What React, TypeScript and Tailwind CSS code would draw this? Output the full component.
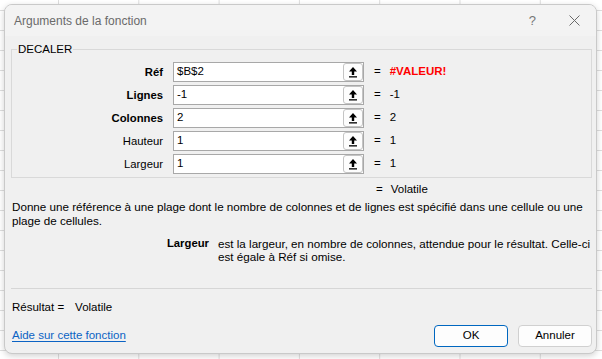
import React from "react";

const font = { fontFamily: '"Liberation Sans", Arial, sans-serif' };

type Arg = { label: string; bold: boolean; value: string; result: string; error?: boolean };

const args: Arg[] = [
  { label: "Réf", bold: true, value: "$B$2", result: "#VALEUR!", error: true },
  { label: "Lignes", bold: true, value: "-1", result: "-1" },
  { label: "Colonnes", bold: true, value: "2", result: "2" },
  { label: "Hauteur", bold: false, value: "1", result: "1" },
  { label: "Largeur", bold: false, value: "1", result: "1" },
];

function CollapseIcon() {
  return (
    <svg width="10" height="12" viewBox="0 0 10 12">
      <path d="M5 1 L9 5.5 L6.2 5.5 L6.2 9 L3.8 9 L3.8 5.5 L1 5.5 Z" fill="#000" />
      <rect x="1" y="10.2" width="8" height="1.3" fill="#000" />
    </svg>
  );
}

function ArgRow({ arg }: { arg: Arg }) {
  return (
    <div className="flex h-[20px] items-center">
      <div
        className={`w-[152px] pr-[1px] text-right text-[11.3px] text-black ${
          arg.bold ? "font-bold" : ""
        }`}
      >
        {arg.label}
      </div>
      <div className="ml-[9px] flex h-[20px] w-[191px] items-center border border-[#a8a8a8] bg-white">
        <span className="flex-1 pl-[3px] text-[11.5px] leading-none text-black">{arg.value}</span>
        <div className="flex h-[18px] w-[20px] items-center justify-center rounded-[3px] border border-[#c4c4c4] bg-[#fdfdfd]">
          <CollapseIcon />
        </div>
      </div>
      <span className="ml-[10px] text-[11.5px] text-black">=</span>
      <span
        className={`ml-[9px] text-[11.5px] ${
          arg.error ? "font-bold text-[#ff0000]" : "text-black"
        }`}
      >
        {arg.result}
      </span>
    </div>
  );
}

export default function App() {
  return (
    <div
      className="h-[359px] w-[602px] overflow-hidden bg-white bg-[linear-gradient(to_right,#dedede_1px,transparent_1px),linear-gradient(to_bottom,#dedede_1px,transparent_1px)] bg-[size:80.3px_20px] bg-[position:58px_10px] pt-[4px] pl-[4px]"
      style={font}
    >
      <div className="flex h-[350px] w-[593px] flex-col overflow-hidden rounded-[8px] border border-[#c9c9c9] bg-[#f0f0f0] shadow-[0_2px_6px_rgba(0,0,0,0.18)]">
        {/* title bar */}
        <div className="flex h-[31px] shrink-0 items-center bg-[#f3f3f3] pl-[9px]">
          <span className="text-[12px] text-[#6a6a6a]">Arguments de la fonction</span>
          <span className="ml-auto mr-[33px] text-[13px] text-[#777]">?</span>
          <svg width="11" height="11" viewBox="0 0 11 11" className="mr-[16px]">
            <path d="M0.5 0.5 L10.5 10.5 M10.5 0.5 L0.5 10.5" stroke="#6a6a6a" strokeWidth="1" />
          </svg>
        </div>

        <div className="flex flex-1 flex-col pl-[6px] pr-[4px]">
          <fieldset className="mt-[5px] border border-[#d9d9d9] pt-[5px] pb-[3px]">
            <legend className="ml-[5px] px-[1px] text-[11.5px] leading-[16px] text-black">DECALER</legend>
            <div className="flex flex-col gap-[3px]">
              {args.map((arg) => (
                <ArgRow key={arg.label} arg={arg} />
              ))}
            </div>
          </fieldset>

          <div className="mt-[5px] flex h-[14px] items-center text-[11.5px] text-black">
            <span className="ml-[365px]">=</span>
            <span className="ml-[8px]">Volatile</span>
          </div>

          <div className="mt-[3px] pl-[1px] text-[11.65px] leading-[14px] text-black">
            <div className="whitespace-nowrap">
              Donne une référence à une plage dont le nombre de colonnes et de lignes est spécifié dans une cellule ou une
            </div>
            <div>plage de cellules.</div>
          </div>

          <div className="mt-[9px] flex text-[11.65px] leading-[13px] text-black">
            <div className="w-[198px] shrink-0 text-right text-[11.3px] font-bold">Largeur</div>
            <div className="ml-[9px]">
              <div className="whitespace-nowrap">
                est la largeur, en nombre de colonnes, attendue pour le résultat. Celle-ci
              </div>
              <div>est égale à Réf si omise.</div>
            </div>
          </div>

          <div className="mt-[25px] h-px bg-[#d6d6d6]" />

          <div className="mt-[12px] flex h-[14px] items-center pl-[1px] text-[11.5px] text-black">
            <span>Résultat =</span>
            <span className="ml-[11px]">Volatile</span>
          </div>

          <div className="mt-[10px] flex items-center">
            <span className="pl-[1px] text-[11.5px] text-[#0b63c4] underline underline-offset-2">
              Aide sur cette fonction
            </span>
            <button
              type="button"
              className="ml-auto h-[22px] w-[74px] rounded-[4px] border border-[#0067c0] bg-[#fdfdfd] text-[11.5px] text-black"
            >
              OK
            </button>
            <button
              type="button"
              className="ml-[10px] h-[22px] w-[74px] rounded-[4px] border border-[#d0d0d0] bg-[#fdfdfd] text-[11.5px] text-black"
            >
              Annuler
            </button>
          </div>
        </div>
      </div>
    </div>
  );
}
